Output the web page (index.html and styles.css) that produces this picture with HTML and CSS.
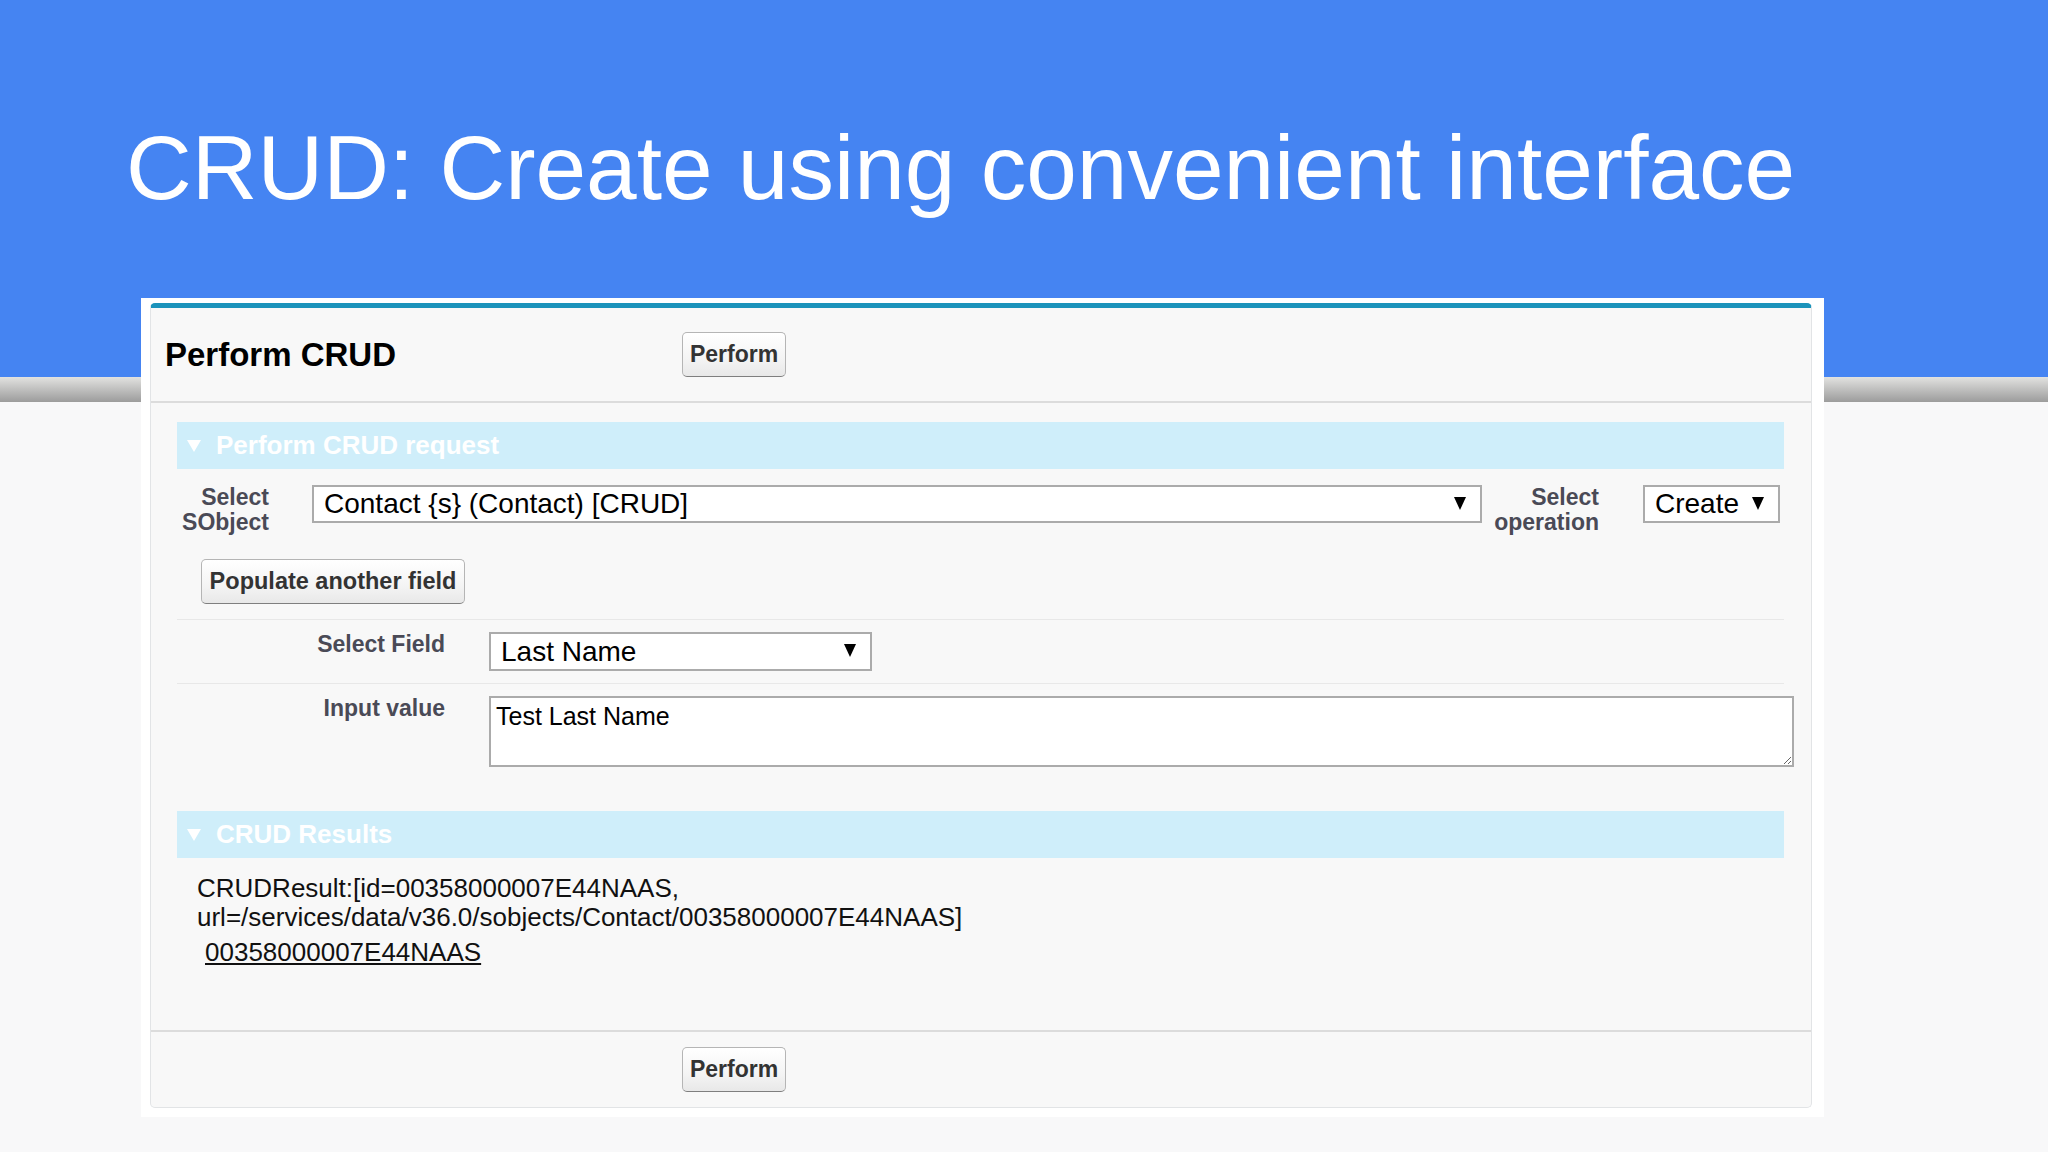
FILE: index.html
```html
<!DOCTYPE html>
<html lang="en">
<head>
<meta charset="utf-8">
<title>CRUD: Create using convenient interface</title>
<link rel="stylesheet" href="styles.css">
</head>
<body>
<div class="slide">
  <h1 class="slide-title">CRUD: Create using convenient interface</h1>
  <div class="card">
    <div class="panel">
      <div class="panel-head">
        <h2 class="panel-title">Perform CRUD</h2>
        <button class="btn btn-perform" type="button">Perform</button>
      </div>
      <div class="panel-body">
        <div class="section">
          <div class="section-head"><span class="twisty"></span><span class="section-title">Perform CRUD request</span></div>
          <div class="row-object">
            <div class="label label-obj">Select<br>SObject</div>
            <div class="select select-obj"><span class="select-text">Contact {s} (Contact) [CRUD]</span><span class="arrow"></span></div>
            <div class="label label-op">Select<br>operation</div>
            <div class="select select-op"><span class="select-text">Create</span><span class="arrow"></span></div>
          </div>
          <button class="btn btn-populate" type="button">Populate another field</button>
          <div class="field-row">
            <div class="label label-field">Select Field</div>
            <div class="select select-field"><span class="select-text">Last Name</span><span class="arrow"></span></div>
          </div>
          <div class="field-row">
            <div class="label label-field">Input value</div>
            <textarea class="input-value" readonly>Test Last Name</textarea>
          </div>
        </div>
        <div class="section section-results">
          <div class="section-head"><span class="twisty"></span><span class="section-title">CRUD Results</span></div>
          <div class="results">
            <div class="result-text">CRUDResult:[id=00358000007E44NAAS,<br>url=/services/data/v36.0/sobjects/Contact/00358000007E44NAAS]</div>
            <a class="result-link" href="#">00358000007E44NAAS</a>
          </div>
        </div>
      </div>
      <div class="panel-foot">
        <button class="btn btn-perform" type="button">Perform</button>
      </div>
    </div>
  </div>
</div>
</body>
</html>
```

FILE: styles.css
```css
html, body {
  margin: 0;
  padding: 0;
}

body {
  font-family: "Liberation Sans", Arial, sans-serif;
  background: #f8f8f9;
}

.slide {
  width: 2048px;
  height: 1152px;
  overflow: hidden;
  background: linear-gradient(to bottom,
    #4584f2 0px, #4584f2 377px,
    #e2e2e0 377px, #9c9c9c 402px,
    #f8f8f9 402px, #f8f8f9 100%);
}

.slide-title {
  margin: 0;
  padding: 116px 0 0 126px;
  font-size: 91px;
  line-height: 104px;
  font-weight: normal;
  color: #ffffff;
  white-space: nowrap;
}

.card {
  margin: 78px 0 0 141px;
  width: 1683px;
  box-sizing: border-box;
  padding: 5px 12px 9px 9px;
  background: #ffffff;
}

.panel {
  background: #f8f8f8;
  border-top: 5px solid #1b93bb;
  border-left: 1px solid #e2e4e6;
  border-right: 1px solid #e2e4e6;
  border-bottom: 1px solid #e2e4e6;
  border-radius: 5px;
}

.panel-head {
  display: flex;
  align-items: center;
  height: 93px;
  padding-left: 14px;
  border-bottom: 2px solid #dcdcdc;
}

.panel-title {
  margin: 0;
  width: 517px;
  flex-shrink: 0;
  font-size: 33px;
  font-weight: bold;
  color: #000000;
  line-height: 40px;
}

.btn {
  font-family: "Liberation Sans", Arial, sans-serif;
  font-weight: bold;
  font-size: 23px;
  color: #333333;
  height: 45px;
  padding: 0;
  border: 1px solid #b5b5b5;
  border-bottom-color: #7f7f7f;
  border-radius: 5px;
  background: linear-gradient(to bottom, #ffffff 0%, #f4f4f4 60%, #e8e8e8 100%);
  text-align: center;
  line-height: 43px;
}

.btn-perform {
  width: 104px;
}

.panel-body {
  padding: 19px 27px 63px 26px;
}

.section-head {
  display: flex;
  align-items: center;
  height: 47px;
  background: #cfeefa;
}

.twisty {
  width: 0;
  height: 0;
  margin-left: 10px;
  margin-right: 15px;
  border-left: 7px solid transparent;
  border-right: 7px solid transparent;
  border-top: 12px solid #ffffff;
}

.section-title {
  font-size: 26px;
  font-weight: bold;
  color: #ffffff;
}

.row-object {
  display: flex;
  align-items: flex-start;
  margin-top: 16px;
}

.label {
  font-size: 23px;
  line-height: 25px;
  font-weight: bold;
  color: #4a4a56;
  text-align: right;
  flex-shrink: 0;
}

.label-obj {
  width: 92px;
  margin-right: 43px;
}

.label-op {
  width: 117px;
  margin-right: 44px;
}

.select {
  display: flex;
  align-items: center;
  justify-content: space-between;
  box-sizing: border-box;
  height: 38px;
  padding: 0 14px 0 10px;
  background: #ffffff;
  border: 2px solid #ababab;
  font-size: 28px;
  color: #000000;
}

.select-obj {
  flex: 1;
}

.select-op {
  width: 137px;
  flex-shrink: 0;
  margin-right: 4px;
}

.select-field {
  width: 383px;
  height: 39px;
  flex-shrink: 0;
}

.select-text {
  white-space: nowrap;
}

.arrow {
  width: 0;
  height: 0;
  border-left: 6px solid transparent;
  border-right: 6px solid transparent;
  border-top: 13px solid #000000;
  margin-top: -2px;
}

.btn-populate {
  display: block;
  width: 264px;
  font-size: 23.5px;
  margin: 24px 0 15px 24px;
}

.field-row {
  display: flex;
  align-items: flex-start;
  border-top: 1px solid #e8e8e8;
  padding: 12px 0;
}

.field-row:last-child {
  padding-bottom: 0;
}

.label-field {
  width: 268px;
  margin-right: 44px;
}

.input-value {
  display: block;
  width: 1305px;
  height: 71px;
  flex-shrink: 0;
  box-sizing: border-box;
  margin: 0;
  padding: 4px 5px;
  border: 2px solid #ababab;
  background: #ffffff;
  font-family: "Liberation Sans", Arial, sans-serif;
  font-size: 25px;
  line-height: 29px;
  color: #000000;
  resize: both;
  outline: none;
}

.section-results {
  margin-top: 44px;
}

.results {
  padding: 16px 0 0 20px;
  font-size: 26px;
  line-height: 29px;
  color: #111111;
}

.result-text {
  white-space: nowrap;
}

.result-link {
  display: inline-block;
  margin: 6px 0 0 8px;
  color: #111111;
  text-decoration: underline;
}

.panel-foot {
  display: flex;
  align-items: center;
  height: 75px;
  padding-left: 531px;
  border-top: 2px solid #dcdcdc;
}
```
